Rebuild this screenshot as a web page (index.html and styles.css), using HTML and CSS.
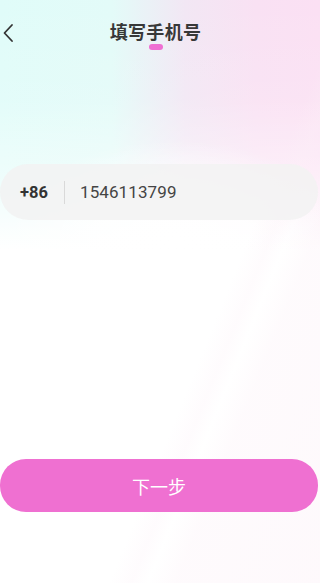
FILE: index.html
```html
<!DOCTYPE html>
<html lang="zh">
<head>
<meta charset="utf-8">
<meta name="viewport" content="width=device-width, initial-scale=1">
<title>填写手机号</title>
<link rel="stylesheet" href="styles.css">
</head>
<body>
<div class="page">
  <header class="header">
    <button class="back" aria-label="返回">
      <svg width="12" height="20" viewBox="0 0 12 20"><path d="M10 2 L2.5 10 L10 18" fill="none" stroke="#333" stroke-width="1.8" stroke-linecap="round" stroke-linejoin="round"/></svg>
    </button>
    <div class="title-wrap">
      <h1 class="title">填写手机号</h1>
      <span class="title-bar"></span>
    </div>
  </header>

  <div class="phone-field">
    <span class="code">+86</span>
    <span class="divider"></span>
    <span class="number">1546113799</span>
  </div>

  <div class="spacer"></div>

  <button class="next">下一步</button>
</div>
</body>
</html>
```

FILE: styles.css
```css
* { box-sizing: border-box; }
html, body { margin: 0; padding: 0; }
body {
  width: 320px;
  height: 583px;
  overflow: hidden;
  font-family: Roboto, "Noto Sans CJK SC", sans-serif;
  background-color: #fff;
  background-image:
    linear-gradient(112deg, rgba(255,255,255,0) 0, rgba(255,255,255,0) 62%, rgba(252,240,247,0.25) 66%, rgba(255,255,255,0) 69%, rgba(252,240,247,0.3) 74%, rgba(252,240,247,0.4) 100%),
    radial-gradient(ellipse 170px 100px at 175px 240px, #fff 0%, rgba(255,255,255,0.85) 45%, rgba(255,255,255,0) 100%),
    linear-gradient(180deg, rgba(255,255,255,0) 0, rgba(255,255,255,0.1) 100px, rgba(255,255,255,0.5) 185px, #fff 250px),
    linear-gradient(90deg, #e0fcf9 0%, #e3fbf8 35%, #f2e7f4 58%, #f9e1f3 80%, #fbe0f3 100%);
  background-repeat: no-repeat;
  background-size: 100% 100%, 100% 300px, 100% 260px, 100% 260px;
}
.page {
  display: flex;
  flex-direction: column;
  height: 583px;
}
.header {
  position: relative;
  height: 64px;
  display: flex;
  justify-content: center;
  padding-top: 20px;
  padding-right: 9px;
}
.back {
  position: absolute;
  left: 1px;
  top: 23px;
  border: 0;
  background: none;
  padding: 0;
  width: 14px;
  height: 20px;
  cursor: pointer;
}
.title-wrap {
  display: flex;
  flex-direction: column;
  align-items: center;
}
.title {
  margin: 0;
  font-family: "Noto Sans CJK SC", sans-serif;
  font-size: 18px;
  line-height: 22px;
  font-weight: 700;
  color: #383838;
  letter-spacing: 0.3px;
}
.title-bar {
  margin-top: 2px;
  width: 14px;
  height: 6px;
  border-radius: 3px;
  background: #ef6fd2;
}
.phone-field {
  margin-top: 100px;
  width: 318px;
  height: 56px;
  border-radius: 28px;
  background: rgba(242,242,242,0.85);
  display: flex;
  align-items: center;
  padding-left: 20px;
}
.code {
  font-size: 16.5px;
  font-weight: 700;
  color: #333;
  width: 44px;
}
.divider {
  width: 1px;
  height: 23px;
  background: #d9d9d9;
}
.number {
  margin-left: 15px;
  font-size: 17px;
  color: #444;
  letter-spacing: 0.1px;
}
.spacer { height: 239px; }
.next {
  width: 318px;
  height: 53px;
  border: 0;
  border-radius: 26px;
  background: #ef70d1;
  color: #fff;
  font-family: "Noto Sans CJK SC", sans-serif;
  font-size: 18px;
  padding: 0;
  cursor: pointer;
}
```
